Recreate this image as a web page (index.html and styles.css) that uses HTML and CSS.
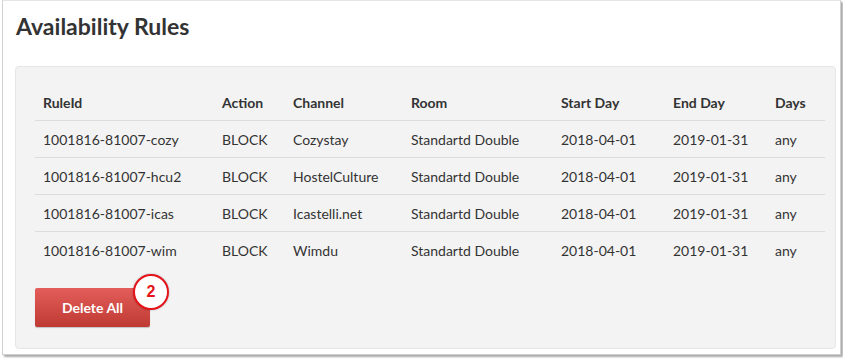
FILE: index.html
```html
<!DOCTYPE html>
<html>
<head>
<meta charset="utf-8">
<link rel="stylesheet" href="styles.css">
</head>
<body>
<div class="frame">
  <h1 class="title">Availability Rules</h1>
  <div class="panel">
    <table class="rules">
      <colgroup>
        <col class="c1"><col class="c2"><col class="c3"><col class="c4"><col class="c5"><col class="c6"><col class="c7">
      </colgroup>
      <thead>
        <tr><th>RuleId</th><th>Action</th><th>Channel</th><th>Room</th><th>Start Day</th><th>End Day</th><th>Days</th></tr>
      </thead>
      <tbody>
        <tr><td>1001816-81007-cozy</td><td>BLOCK</td><td>Cozystay</td><td>Standartd Double</td><td>2018-04-01</td><td>2019-01-31</td><td>any</td></tr>
        <tr><td>1001816-81007-hcu2</td><td>BLOCK</td><td>HostelCulture</td><td>Standartd Double</td><td>2018-04-01</td><td>2019-01-31</td><td>any</td></tr>
        <tr><td>1001816-81007-icas</td><td>BLOCK</td><td>Icastelli.net</td><td>Standartd Double</td><td>2018-04-01</td><td>2019-01-31</td><td>any</td></tr>
        <tr><td>1001816-81007-wim</td><td>BLOCK</td><td>Wimdu</td><td>Standartd Double</td><td>2018-04-01</td><td>2019-01-31</td><td>any</td></tr>
      </tbody>
    </table>
    <div class="actions">
      <button class="btn-delete">Delete All</button>
      <span class="badge">2</span>
    </div>
  </div>
</div>
</body>
</html>
```

FILE: styles.css
```css
html, body {
  margin: 0;
  padding: 0;
  background: #ffffff;
}
body {
  font-family: Lato, "Open Sans", "Liberation Sans", sans-serif;
  color: #333;
  width: 843px;
  height: 358px;
  overflow: hidden;
}
.frame {
  box-sizing: border-box;
  margin-left: 2px;
  width: 839px;
  height: 355px;
  border: 1px solid #d0d0d0;
  border-top-color: #e4e4e4;
  box-shadow: 2px 2px 2px rgba(0,0,0,0.35);
  padding: 0 5px 0 12px;
  background: #fff;
}
.title {
  margin: 11px 0 0 1px;
  height: 54px;
  font-size: 23px;
  font-weight: 700;
  color: #333;
  line-height: 28px;
}
.panel {
  box-sizing: border-box;
  width: 821px;
  height: 283px;
  background: #f3f3f3;
  border: 1px solid #e6e6e6;
  border-radius: 4px;
  padding: 18px 0 0 19px;
  position: relative;
}
.rules {
  border-collapse: collapse;
  width: 790px;
  font-size: 14px;
  table-layout: fixed;
}
.c1 { width: 179px; }
.c2 { width: 71px; }
.c3 { width: 118px; }
.c4 { width: 150px; }
.c5 { width: 112px; }
.c6 { width: 102px; }
.c7 { width: 58px; }
.rules th, .rules td {
  text-align: left;
  padding: 0 0 0 8px;
  height: 36px;
  white-space: nowrap;
}
.rules th {
  font-weight: 700;
  color: #333;
  border-bottom: 1px solid #dcdcdc;
  height: 35px;
}
.rules tbody tr td {
  border-bottom: 1px solid #dcdcdc;
  color: #333;
}
.rules tbody tr:last-child td {
  border-bottom: none;
}
.actions {
  margin-top: 20px;
  position: relative;
  height: 40px;
}
.btn-delete {
  width: 115px;
  height: 39px;
  border: none;
  border-radius: 2px;
  background: linear-gradient(#e35e5b, #bf3a32);
  color: #fff;
  font-family: Lato, "Open Sans", "Liberation Sans", sans-serif;
  font-weight: 700;
  font-size: 14px;
  box-shadow: 0 1px 1px rgba(0,0,0,0.2);
  padding: 0;
}
.badge {
  position: absolute;
  left: 98px;
  top: -14px;
  width: 32px;
  height: 32px;
  border: 2px solid #e5131a;
  border-radius: 50%;
  background: #fff;
  color: #e5131a;
  font-family: "Liberation Sans", Arial, sans-serif;
  font-weight: 700;
  font-size: 16px;
  line-height: 32px;
  text-align: center;
  box-shadow: 0 0 2px rgba(0,0,0,0.3);
}
```
